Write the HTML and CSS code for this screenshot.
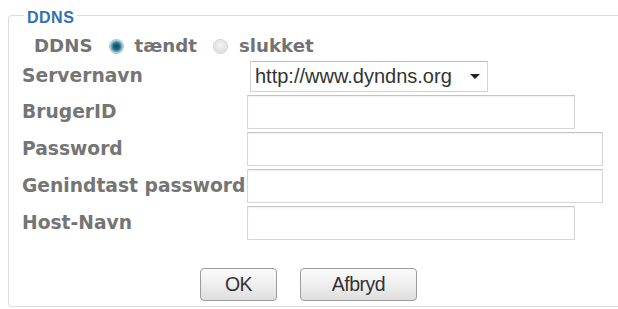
FILE: index.html
```html
<!DOCTYPE html>
<html>
<head>
<meta charset="utf-8">
<link rel="stylesheet" href="styles.css">
</head>
<body>
<fieldset class="box">
  <legend class="box-title">DDNS</legend>
  <div class="toggle-row">
    <span class="toggle-label">DDNS</span>
    <span class="radio radio-on"></span>
    <span class="toggle-label">tændt</span>
    <span class="radio"></span>
    <span class="toggle-label">slukket</span>
  </div>
  <div class="form-grid">
    <div class="label">Servernavn</div>
    <div class="field">
      <div class="select">
        <span class="select-text">http://www.dyndns.org</span>
        <svg class="select-arrow" width="10" height="5" viewBox="0 0 10 5"><path d="M0 0H10L5 5Z" fill="#222"/></svg>
      </div>
    </div>
    <div class="label">BrugerID</div>
    <div class="field"><input class="input input-short" type="text"></div>
    <div class="label">Password</div>
    <div class="field"><input class="input input-long" type="password"></div>
    <div class="label">Genindtast password</div>
    <div class="field"><input class="input input-long" type="password"></div>
    <div class="label">Host-Navn</div>
    <div class="field"><input class="input input-short" type="text"></div>
  </div>
  <div class="actions">
    <button class="btn btn-ok" type="button">OK</button>
    <button class="btn btn-cancel" type="button">Afbryd</button>
  </div>
</fieldset>
</body>
</html>
```

FILE: styles.css
```css
html, body {
  margin: 0;
  padding: 0;
  background: #ffffff;
  overflow: hidden;
}

body {
  padding-top: 4px;
  font-family: "DejaVu Sans", Verdana, sans-serif;
}

.box {
  margin: 0 0 0 8px;
  padding: 0 0 5px 0;
  border: 1px solid #dcdcdc;
  border-right: none;
  border-radius: 4px 0 0 4px;
  min-width: 0;
}

.box-title {
  margin-left: 15px;
  padding: 5px 3px 0 3px;
  font-family: "Liberation Sans", Arial, sans-serif;
  font-weight: bold;
  font-size: 16px;
  line-height: 18px;
  letter-spacing: 0.5px;
  color: #3170b6;
}

.toggle-row {
  display: flex;
  align-items: center;
  height: 22px;
  margin-top: 8px;
  padding-left: 25px;
}

.toggle-label {
  font-size: 18.2px;
  font-weight: bold;
  line-height: 22px;
  color: #737373;
}

.radio {
  display: inline-block;
  width: 13px;
  height: 13px;
  border-radius: 50%;
  margin: 0 12px 0 17px;
  background: radial-gradient(circle at 50% 40%, #f4f4f4 0%, #dedede 70%, #cacaca 100%);
  box-shadow: 0 0 0 1px #d4d4d4;
}

.radio-on {
  background: radial-gradient(circle at 50% 50%, #0b4c66 0%, #1d6c89 36%, #9cc1d1 66%, #dae8ee 100%);
  box-shadow: 0 0 0 1px #aac5d1;
}

.form-grid {
  display: grid;
  grid-template-columns: 226px auto;
  grid-template-rows: 32px 34px 34px 34px 34px;
  row-gap: 3px;
  margin-top: 3px;
  padding-left: 13px;
  align-items: center;
}

.label {
  font-size: 18.7px;
  font-weight: bold;
  color: #757575;
  white-space: nowrap;
  line-height: 22px;
}

.field {
  display: flex;
  align-items: center;
  height: 100%;
}

.select {
  display: flex;
  align-items: center;
  justify-content: space-between;
  box-sizing: border-box;
  width: 238px;
  height: 31px;
  margin-left: 2px;
  padding: 0 7px 0 4px;
  border: 1px solid #d4d4d4;
  border-top-color: #bdbdbd;
  background: #ffffff;
}

.select-text {
  font-family: "Liberation Sans", Arial, sans-serif;
  font-size: 20px;
  color: #333333;
  line-height: 22px;
}

.select-arrow {
  display: block;
  margin-top: 1px;
}

.input {
  box-sizing: border-box;
  height: 34px;
  margin: 0 0 0 -1px;
  padding: 0 4px;
  border: 1px solid #d6d6d6;
  border-top-color: #c4c4c4;
  background: #ffffff;
  box-shadow: inset 0 1px 2px rgba(0, 0, 0, 0.06);
  outline: none;
}

.input-short {
  width: 328px;
}

.input-long {
  width: 356px;
}

.actions {
  display: flex;
  gap: 23px;
  margin-top: 28px;
  padding-left: 191px;
}

.btn {
  box-sizing: border-box;
  height: 33px;
  padding: 0;
  border: 1px solid #9c9c9c;
  border-radius: 4px;
  background: linear-gradient(#fbfbfb 0%, #f0f0f0 45%, #dedede 100%);
  font-family: "Liberation Sans", Arial, sans-serif;
  font-size: 19.5px;
  color: #333333;
  letter-spacing: -0.5px;
}

.btn-ok {
  width: 77px;
}

.btn-cancel {
  width: 117px;
}
```
